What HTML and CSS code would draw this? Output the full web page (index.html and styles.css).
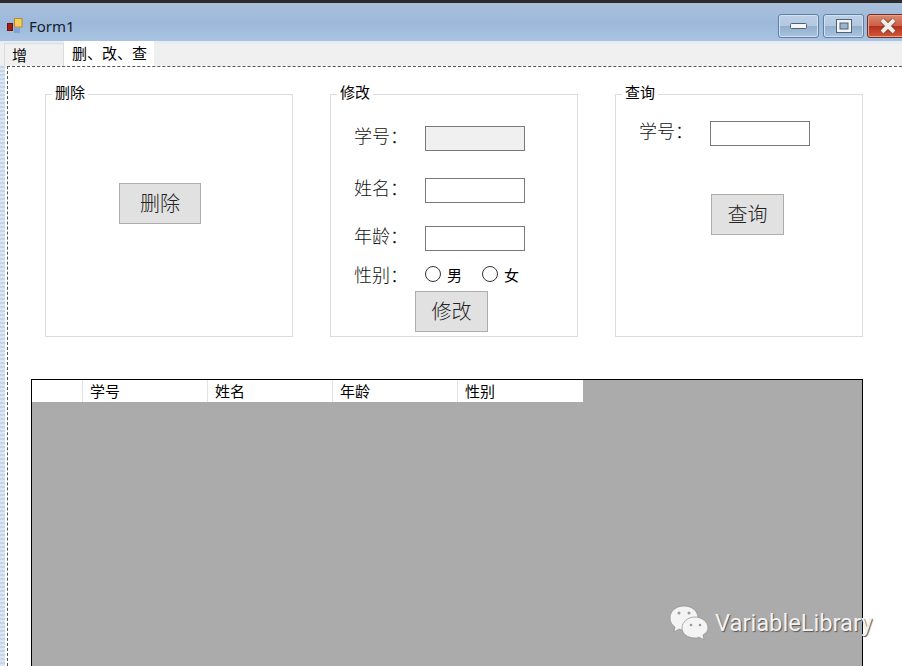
FILE: index.html
```html
<!DOCTYPE html>
<html lang="zh-CN">
<head>
  <meta charset="UTF-8">
  <title>Form1</title>
  <link rel="stylesheet" href="styles.css">
</head>
<body>
  <div class="window">
    <div class="topline"></div>
    <div class="titlebar">
      <svg class="app-icon" width="16" height="16" viewBox="0 0 16 16">
        <rect x="0.5" y="5.5" width="5" height="7" fill="#a81c14" stroke="#6a1410" stroke-width="1"/>
        <rect x="7.5" y="0.5" width="7.5" height="8.5" fill="#f6cf5a" stroke="#b98a2c" stroke-width="1"/>
        <rect x="7" y="10" width="6" height="5" fill="#7fa4dc"/>
      </svg>
      <span class="form-title">Form1</span>
      <div class="win-buttons">
        <div class="win-btn">
          <svg width="18" height="8" viewBox="0 0 18 8"><rect x="0.5" y="1.5" width="16" height="5" rx="1" fill="#f4f6f8" stroke="#4f6276"/></svg>
        </div>
        <div class="win-btn">
          <svg width="18" height="16" viewBox="0 0 18 16"><rect x="1.5" y="1.5" width="15" height="13" fill="#f2f4f6" stroke="#4f6276"/><rect x="5" y="5" width="8" height="6" fill="#9db4cd" stroke="#4f6276"/></svg>
        </div>
        <div class="win-btn close">
          <svg width="20" height="16" viewBox="0 0 20 16"><path d="M4 2 L16 14 M16 2 L4 14" stroke="#6d3a30" stroke-width="5.5"/><path d="M4 2 L16 14 M16 2 L4 14" stroke="#f1eeea" stroke-width="4"/></svg>
        </div>
      </div>
    </div>

    <div class="tabs">
      <div class="tab">增</div>
      <div class="tab active">删、改、查</div>
    </div>

    <div class="designer">
      <div class="edge"></div>
      <div class="page">
        <div class="groups">
          <fieldset class="group group-delete">
            <legend>删除</legend>
            <button class="btn btn-delete">删除</button>
          </fieldset>

          <fieldset class="group group-edit">
            <legend>修改</legend>
            <div class="row row-id">
              <label>学号：</label>
              <input type="text" class="field" disabled>
            </div>
            <div class="row row-name">
              <label>姓名：</label>
              <input type="text" class="field">
            </div>
            <div class="row row-age">
              <label>年龄：</label>
              <input type="text" class="field">
            </div>
            <div class="row row-sex">
              <label>性别：</label>
              <span class="radio"><input type="radio" name="sex"> 男</span>
              <span class="radio"><input type="radio" name="sex"> 女</span>
            </div>
            <button class="btn btn-edit">修改</button>
          </fieldset>

          <fieldset class="group group-query">
            <legend>查询</legend>
            <div class="row row-query">
              <label>学号：</label>
              <input type="text" class="field">
            </div>
            <button class="btn btn-query">查询</button>
          </fieldset>
        </div>

        <div class="datagrid">
          <div class="grid-head">
            <div class="cell corner"></div>
            <div class="cell">学号</div>
            <div class="cell">姓名</div>
            <div class="cell">年龄</div>
            <div class="cell">性别</div>
          </div>
        </div>
      </div>
    </div>

    <div class="watermark">
      <svg width="40" height="36" viewBox="0 0 40 36">
        <path d="M15 1 C7 1 1 6 1 13 C1 17 3 20 6 22 L5 27 L10 24 C12 25 14 25 16 25 C24 25 29 19 29 13 C29 6 23 1 15 1 Z" fill="#f4f4f4" stroke="#8e8e8e" stroke-width="0.7"/>
        <path d="M26 12 C19 12 13 17 13 23 C13 29 19 33 26 33 C27 33 29 33 30 32 L35 35 L34 30 C37 28 39 26 39 23 C39 17 33 12 26 12 Z" fill="#f4f4f4" stroke="#8e8e8e" stroke-width="0.7"/>
        <circle cx="10" cy="8" r="1.5" fill="#9a9a9a"/>
        <circle cx="20" cy="8" r="1.5" fill="#9a9a9a"/>
        <circle cx="22" cy="20" r="1.3" fill="#9a9a9a"/>
        <circle cx="31" cy="20" r="1.3" fill="#9a9a9a"/>
      </svg>
      <span class="wm-text">VariableLibrary</span>
    </div>
  </div>
</body>
</html>
```

FILE: styles.css
```css
* {
  box-sizing: border-box;
}
html, body {
  margin: 0;
  height: 100%;
  overflow: hidden;
}
body {
  font-family: "Noto Sans CJK SC", "Noto Sans", sans-serif;
  font-weight: 300;
  background: #fff;
  color: #000;
}
.window {
  position: relative;
  display: flex;
  flex-direction: column;
  width: 902px;
  height: 666px;
  overflow: hidden;
}
.topline {
  height: 3px;
  background: #2b2b2b;
}

/* title bar */
.titlebar {
  display: flex;
  align-items: center;
  height: 38px;
  padding-left: 7px;
  background: linear-gradient(to bottom, #a9c0dc 0%, #9cb9da 55%, #a9c4e2 100%);
}
.app-icon {
  margin-top: 8px;
  flex: none;
}
.form-title {
  margin: 8px 0 0 6px;
  font-family: "Noto Sans", sans-serif;
  font-weight: 400;
  font-size: 15px;
  color: #14202e;
}
.win-buttons {
  display: flex;
  gap: 4px;
  margin: 8px -6px 0 auto;
}
.win-btn {
  display: flex;
  align-items: center;
  justify-content: center;
  width: 41px;
  height: 24px;
  border: 1px solid #5f7fa8;
  border-radius: 3px;
  background: linear-gradient(to bottom, #bcd0e6 0%, #b3c9e1 48%, #92aecb 50%, #a9c3dd 100%);
  box-shadow: inset 0 0 0 1px #d3e0ee;
}
.win-btn.close {
  margin-left: -1px;
  border-color: #7a2a20;
  background: linear-gradient(to bottom, #d98a72 0%, #cc5f48 48%, #b5301c 52%, #cf5a3c 100%);
  box-shadow: inset 0 0 0 1px #e3a590;
}

/* tabs */
.tabs {
  display: flex;
  align-items: flex-end;
  height: 25px;
  padding-left: 4px;
  background: linear-gradient(to bottom, #e4ebf3 0, #f0f0f0 5px);
}
.tab {
  width: 60px;
  height: 23px;
  padding-left: 7px;
  font-weight: 400;
  font-size: 15px;
  line-height: 21px;
  border: 1px solid #dcdcdc;
  border-bottom: none;
}
.tab.active {
  width: 90px;
  height: 25px;
  padding-left: 8px;
  line-height: 23px;
  background: #fff;
  border: none;
}

/* designer surface */
.designer {
  display: flex;
  flex: 1;
  min-height: 0;
}
.edge {
  width: 5px;
  background: repeating-linear-gradient(to bottom, #c3d5ea 0, #c3d5ea 2px, #dde7f3 2px, #dde7f3 4px);
}
.page {
  flex: 1;
  margin-left: 2px;
  padding: 17px 0 0 37px;
  background: #fff;
  border-top: 1px dashed #555;
  border-left: 1px dashed #555;
}
.groups {
  display: flex;
  gap: 37px;
}

/* group boxes */
.group {
  width: 248px;
  height: 253px;
  margin: 0;
  padding: 0;
  border: 1px solid #dcdcdc;
  min-width: 0;
}
.group legend {
  margin-left: 6px;
  padding: 0 3px 4px;
  font-weight: 400;
  font-size: 15px;
  line-height: 16px;
}
.row {
  display: flex;
  align-items: center;
}
.row label {
  width: 71px;
  height: 25px;
  font-size: 18px;
  line-height: 19px;
  color: #111;
}
.group-edit .row,
.group-query .row {
  padding-left: 23px;
}
.row-id {
  margin-top: 22px;
}
.row-name {
  margin-top: 27px;
}
.row-age {
  margin-top: 23px;
}
.row-sex {
  height: 18px;
  margin-top: 14px;
}
.row-sex label {
  line-height: 25px;
}
.row-query {
  margin-top: 17px;
}
.field {
  width: 100px;
  height: 25px;
  margin: 0;
  padding: 0 4px;
  background: #fff;
  border: 1px solid #7a7a7a;
  border-radius: 0;
}
.field:disabled {
  background: #f0f0f0;
}
.radio {
  display: flex;
  align-items: center;
  gap: 6px;
  width: 57px;
  font-weight: 400;
  font-size: 15px;
}
.radio input {
  appearance: none;
  width: 16px;
  height: 16px;
  margin: 0;
  border: 1px solid #333;
  border-radius: 50%;
  background: #fff;
}

/* buttons */
.btn {
  display: block;
  height: 41px;
  padding: 0 0 3px;
  font-family: inherit;
  font-weight: 300;
  font-size: 20px;
  color: #222;
  background: #e1e1e1;
  border: 1px solid #adadad;
  border-radius: 0;
}
.btn-delete {
  width: 82px;
  margin: 79px 0 0 73px;
}
.btn-edit {
  width: 73px;
  margin: 8px 0 0 84px;
}
.btn-query {
  width: 73px;
  margin: 48px 0 0 95px;
}

/* data grid */
.datagrid {
  width: 832px;
  height: 320px;
  margin: 42px 0 0 -14px;
  padding: 0;
  background: #ababab;
  border: 1px solid #000;
}
.grid-head {
  display: flex;
  width: 551px;
  height: 22px;
  background: #fff;
}
.cell {
  width: 125px;
  padding-left: 7px;
  font-weight: 400;
  font-size: 15px;
  line-height: 22px;
  border-right: 1px solid #e2e2e2;
}
.cell.corner {
  width: 51px;
  padding: 0;
}
.cell:last-child {
  border-right: none;
}

/* watermark on top of the screenshot */
.watermark {
  position: absolute;
  left: 669px;
  top: 605px;
  display: flex;
  align-items: center;
  gap: 6px;
}
.wm-text {
  font-family: Roboto, sans-serif;
  font-weight: 400;
  font-size: 23.7px;
  color: #f2f2f2;
  text-shadow: 1px 1px 1px #555;
}
```
